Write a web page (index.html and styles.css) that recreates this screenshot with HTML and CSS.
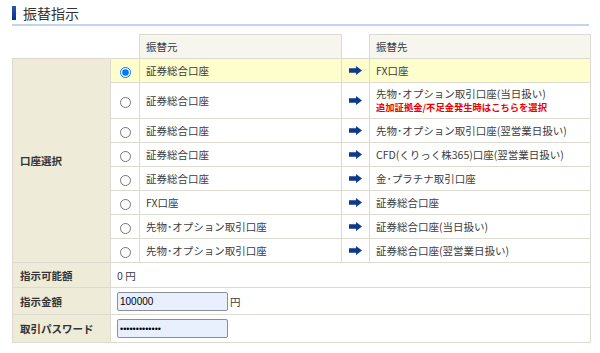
FILE: index.html
```html
<!DOCTYPE html>
<html lang="ja">
<head>
<meta charset="utf-8">
<link rel="stylesheet" href="styles.css">
</head>
<body>
<div class="page">
  <h1 class="title"><span class="bar"></span>振替指示</h1>
  <table class="grid">
    <colgroup>
      <col class="c-label"><col class="c-radio"><col class="c-src"><col class="c-arrow"><col class="c-dst">
    </colgroup>
    <thead>
      <tr class="r-head">
        <th class="blank"></th><th class="blank"></th>
        <th class="hd">振替元</th>
        <th class="blank"></th>
        <th class="hd">振替先</th>
      </tr>
    </thead>
    <tbody>
      <tr class="r sel">
        <th class="lbl" rowspan="8">口座選択</th>
        <td class="rad"><input type="radio" name="acc" checked></td>
        <td class="txt">証券総合口座</td>
        <td class="arw"><svg width="13" height="9" viewBox="0 0 13 9"><path d="M0 2.3h7V0l6 4.5-6 4.5V6.7H0z" fill="#0d3a8c"/></svg></td>
        <td class="txt">FX口座</td>
      </tr>
      <tr class="r tall">
        <td class="rad"><input type="radio" name="acc"></td>
        <td class="txt">証券総合口座</td>
        <td class="arw"><svg width="13" height="9" viewBox="0 0 13 9"><path d="M0 2.3h7V0l6 4.5-6 4.5V6.7H0z" fill="#0d3a8c"/></svg></td>
        <td class="txt">先物･オプション取引口座(当日扱い)<br><span class="warn">追加証拠金/不足金発生時はこちらを選択</span></td>
      </tr>
      <tr class="r">
        <td class="rad"><input type="radio" name="acc"></td>
        <td class="txt">証券総合口座</td>
        <td class="arw"><svg width="13" height="9" viewBox="0 0 13 9"><path d="M0 2.3h7V0l6 4.5-6 4.5V6.7H0z" fill="#0d3a8c"/></svg></td>
        <td class="txt">先物･オプション取引口座(翌営業日扱い)</td>
      </tr>
      <tr class="r">
        <td class="rad"><input type="radio" name="acc"></td>
        <td class="txt">証券総合口座</td>
        <td class="arw"><svg width="13" height="9" viewBox="0 0 13 9"><path d="M0 2.3h7V0l6 4.5-6 4.5V6.7H0z" fill="#0d3a8c"/></svg></td>
        <td class="txt">CFD(くりっく株365)口座(翌営業日扱い)</td>
      </tr>
      <tr class="r">
        <td class="rad"><input type="radio" name="acc"></td>
        <td class="txt">証券総合口座</td>
        <td class="arw"><svg width="13" height="9" viewBox="0 0 13 9"><path d="M0 2.3h7V0l6 4.5-6 4.5V6.7H0z" fill="#0d3a8c"/></svg></td>
        <td class="txt">金･プラチナ取引口座</td>
      </tr>
      <tr class="r">
        <td class="rad"><input type="radio" name="acc"></td>
        <td class="txt">FX口座</td>
        <td class="arw"><svg width="13" height="9" viewBox="0 0 13 9"><path d="M0 2.3h7V0l6 4.5-6 4.5V6.7H0z" fill="#0d3a8c"/></svg></td>
        <td class="txt">証券総合口座</td>
      </tr>
      <tr class="r">
        <td class="rad"><input type="radio" name="acc"></td>
        <td class="txt">先物･オプション取引口座</td>
        <td class="arw"><svg width="13" height="9" viewBox="0 0 13 9"><path d="M0 2.3h7V0l6 4.5-6 4.5V6.7H0z" fill="#0d3a8c"/></svg></td>
        <td class="txt">証券総合口座(当日扱い)</td>
      </tr>
      <tr class="r">
        <td class="rad"><input type="radio" name="acc"></td>
        <td class="txt">先物･オプション取引口座</td>
        <td class="arw"><svg width="13" height="9" viewBox="0 0 13 9"><path d="M0 2.3h7V0l6 4.5-6 4.5V6.7H0z" fill="#0d3a8c"/></svg></td>
        <td class="txt">証券総合口座(翌営業日扱い)</td>
      </tr>
      <tr class="f1">
        <th class="lbl2">指示可能額</th>
        <td class="val" colspan="4">0 円</td>
      </tr>
      <tr class="f2">
        <th class="lbl2">指示金額</th>
        <td class="val" colspan="4"><input class="inp" type="text" value="100000"><span class="yen">円</span></td>
      </tr>
      <tr class="f3">
        <th class="lbl2">取引パスワード</th>
        <td class="val" colspan="4"><input class="inp pw" type="password" value="abcdefghijklm"></td>
      </tr>
    </tbody>
  </table>
</div>
</body>
</html>
```

FILE: styles.css
```css
html, body {
  margin: 0;
  padding: 0;
  background: #ffffff;
}
body {
  font-family: "Noto Sans CJK JP", "Liberation Sans", sans-serif;
  color: #3c3c3c;
  font-size: 10.5px;
}
.page {
  padding: 0 11px 0 12px;
}
.title {
  margin: 0;
  height: 23px;
  display: flex;
  align-items: center;
  gap: 7px;
  font-size: 14px;
  font-weight: normal;
  color: #333333;
  border-bottom: 2px solid #c2d4ee;
  line-height: 1;
  padding-top: 1px;
}
.bar {
  width: 4px;
  height: 14px;
  background: linear-gradient(#2a56b8, #0d2f7c);
}
.grid {
  margin-top: 8px;
  width: 578px;
  border-collapse: collapse;
  table-layout: fixed;
}
.c-label { width: 98px; }
.c-radio { width: 29px; }
.c-src { width: 202px; }
.c-arrow { width: 28px; }
.c-dst { width: 221px; }
.grid th, .grid td {
  border: 1px solid #dddad0;
  padding: 0;
  font-weight: normal;
  text-align: left;
  vertical-align: middle;
}
.grid th.blank {
  border: none;
}
.r-head { height: 24px; }
.hd {
  background: #f6f5ee;
  padding-left: 6px !important;
}
.r { height: 24px; }
.r.tall { height: 36px; }
.sel td { background: #fefdcc; }
.lbl, .lbl2 {
  background: #eeebd8;
  font-weight: bold !important;
  padding-left: 7px !important;
  color: #333333;
}
.rad { text-align: center !important; }
.rad input {
  margin: 0;
  width: 11px;
  height: 11px;
  vertical-align: middle;
}
.txt {
  padding-left: 6px !important;
  line-height: 13px;
}
.arw { text-align: center !important; }
.arw svg { display: block; margin: 0 auto; }
.warn {
  color: #ee0000;
  font-weight: bold;
  font-size: 9.3px;
}
.f1 { height: 25px; }
.f2 { height: 27px; }
.f3 { height: 28px; }
.val {
  padding-left: 6px !important;
}
.inp {
  box-sizing: border-box;
  width: 111px;
  height: 19px;
  margin: 0;
  padding: 0 2px;
  border: 1px solid #8a8f99;
  border-radius: 2px;
  background: #e8f0fe;
  font-family: "Liberation Sans", sans-serif;
  font-size: 10px;
  color: #000;
  vertical-align: middle;
}
.pw { font-size: 9px; letter-spacing: 0; }
.yen {
  margin-left: 2px;
  vertical-align: middle;
}
```
